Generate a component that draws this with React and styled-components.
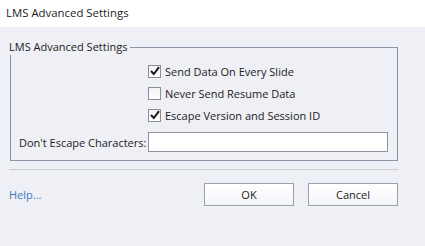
import { Fragment } from "react";
import styled, { createGlobalStyle } from "styled-components";

const GlobalStyle = createGlobalStyle`
  html, body {
    margin: 0;
    padding: 0;
    background-color: #eff0f6;
    font-family: "Open Sans", "Noto Sans", sans-serif;
    font-size: 11px;
    color: #1b1b1b;
  }
`;

const Window = styled.div`
  width: 425px;
  height: 246px;
  background-color: #eff0f6;
  overflow: hidden;
`;

const TitleBar = styled.div`
  height: 27px;
  background-color: #ffffff;
  display: flex;
  align-items: center;
  padding-left: 6px;
  font-size: 11.4px;
  padding-bottom: 2px;
  box-sizing: border-box;
`;

const GroupBox = styled.fieldset`
  margin: 12px 27px 0 10px;
  padding: 5px 0 8px 0;
  border: 1px solid #8b93a4;
  border-radius: 0;
  min-width: 0;
`;

const Legend = styled.legend`
  padding: 0 3px 0 0;
  margin-left: -2px;
  line-height: 16px;
`;

const CheckList = styled.div`
  display: flex;
  flex-direction: column;
  padding-left: 137px;
`;

const CheckRow = styled.label`
  display: flex;
  align-items: center;
  gap: 4px;
  height: 22px;
  white-space: nowrap;
`;

const Box = styled.span`
  width: 11px;
  height: 11px;
  border: 1px solid #8a8e98;
  background: linear-gradient(#f4f4f4, #ffffff);
  display: flex;
  align-items: center;
  justify-content: center;
`;

const FieldRow = styled.div`
  display: flex;
  align-items: center;
  margin-top: 6px;
  padding-left: 8px;
`;

const FieldLabel = styled.span`
  width: 129px;
  flex: none;
  white-space: nowrap;
`;

const TextInput = styled.div`
  width: 238px;
  height: 18px;
  background-color: #ffffff;
  border: 1px solid #8d93a0;
`;

const Separator = styled.div`
  margin: 8px 27px 0 9px;
  height: 1px;
  background-color: #c9cbd3;
`;

const Footer = styled.div`
  display: flex;
  align-items: center;
  margin: 13px 27px 0 9px;
`;

const HelpLink = styled.span`
  color: #3b7dbd;
  flex: 1;
`;

const Button = styled.div`
  width: 88px;
  height: 21px;
  border: 1px solid #9aa0b0;
  background: linear-gradient(#ffffff, #f3f4f8);
  display: flex;
  align-items: center;
  justify-content: center;
  margin-left: ${(p) => p.gap || 0}px;
`;

const Check = ({ checked }) => (
  <Box>
    {checked && (
      <svg width="10" height="10" viewBox="0 0 10 10">
        <path d="M1 5 L3.8 8 L9 1.2" fill="none" stroke="#1a1a1a" strokeWidth="2" />
      </svg>
    )}
  </Box>
);

const options = [
  { label: "Send Data On Every Slide", checked: true },
  { label: "Never Send Resume Data", checked: false },
  { label: "Escape Version and Session ID", checked: true },
];

const App = () => {
  return (
    <Fragment>
      <GlobalStyle />
      <Window>
        <TitleBar>LMS Advanced Settings</TitleBar>
        <GroupBox>
          <Legend>LMS Advanced Settings</Legend>
          <CheckList>
            {options.map((o) => (
              <CheckRow key={o.label}>
                <Check checked={o.checked} />
                {o.label}
              </CheckRow>
            ))}
          </CheckList>
          <FieldRow>
            <FieldLabel>Don't Escape Characters:</FieldLabel>
            <TextInput />
          </FieldRow>
        </GroupBox>
        <Separator />
        <Footer>
          <HelpLink>Help...</HelpLink>
          <Button>OK</Button>
          <Button gap={14}>Cancel</Button>
        </Footer>
      </Window>
    </Fragment>
  );
};

export default App;
